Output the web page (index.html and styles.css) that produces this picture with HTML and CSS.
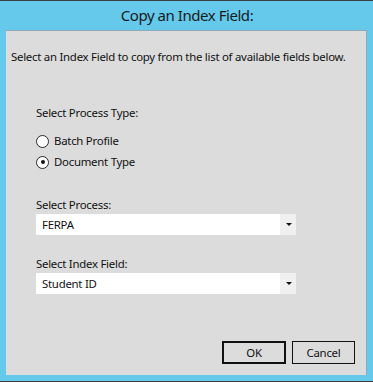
FILE: index.html
```html
<!DOCTYPE html>
<html lang="en">
<head>
    <meta charset="UTF-8">
    <title>Copy an Index Field</title>
    <link rel="stylesheet" href="styles.css">
</head>
<body>
    <div class="window">
        <div class="titlebar">Copy an Index Field:</div>
        <div class="panel">
            <div class="intro">Select an Index Field to copy from the list of available fields below.</div>
            <div class="form">
                <div class="label type-label">Select Process Type:</div>
                <div class="radio first"><span class="dot"></span>Batch Profile</div>
                <div class="radio"><span class="dot checked"></span>Document Type</div>

                <div class="label process-label">Select Process:</div>
                <div class="select">
                    <span class="select-value">FERPA</span>
                    <span class="select-arrow"></span>
                </div>

                <div class="label field-label">Select Index Field:</div>
                <div class="select">
                    <span class="select-value">Student ID</span>
                    <span class="select-arrow"></span>
                </div>
            </div>
            <div class="buttons">
                <div class="button default">OK</div>
                <div class="button">Cancel</div>
            </div>
        </div>
    </div>
</body>
</html>
```

FILE: styles.css
```css
html, body{
    margin: 0;
    padding: 0;
    font-family: "Noto Sans", "Open Sans", sans-serif;
    color: #111;
}
.window{
    background: #64c9eb;
    border-top: 1px solid #3b3f42;
    border-bottom: 1px solid #3b3f42;
    padding: 0 5px 0 6px;
    width: 362px;
    height: 380px;
}
.titlebar{
    height: 29px;
    line-height: 29px;
    text-align: center;
    font-size: 15px;
    letter-spacing: -0.45px;
    color: #1a1a1a;
}
.panel{
    height: 344px;
    width: 355px;
    background: #dcdcdc;
    border-top: 1px solid #8fa9b8;
    border-right: 1px solid #8fa9b8;
    padding-left: 5px;
    display: flex;
    flex-direction: column;
    font-size: 11.4px;
    letter-spacing: -0.25px;
}
.intro{
    margin-top: 18px;
    line-height: 16px;
    white-space: nowrap;
}
.form{
    margin-left: 25px;
    line-height: 16px;
}
.type-label{
    margin-top: 40px;
}
.radio{
    display: flex;
    align-items: center;
    height: 16px;
    margin-top: 5px;
}
.radio.first{
    margin-top: 12px;
}
.dot{
    width: 11px;
    height: 11px;
    border: 1px solid #2b2b2b;
    border-radius: 50%;
    background: #fff;
    margin-right: 5px;
    display: flex;
    align-items: center;
    justify-content: center;
}
.dot.checked::after{
    content: "";
    width: 4px;
    height: 4px;
    border-radius: 50%;
    background: #111;
}
.process-label{
    margin-top: 27px;
}
.field-label{
    margin-top: 21px;
}
.select{
    width: 260px;
    height: 21px;
    background: #fff;
    display: flex;
    align-items: center;
    margin-top: 1px;
}
.select-value{
    flex: 1;
    padding-left: 6px;
}
.select-arrow{
    width: 16px;
    height: 21px;
    background: #f0f0f0;
    position: relative;
}
.select-arrow::after{
    content: "";
    position: absolute;
    left: 6px;
    top: 9px;
    border-left: 3px solid transparent;
    border-right: 3px solid transparent;
    border-top: 3px solid #111;
}
.buttons{
    margin-top: auto;
    margin-bottom: 11px;
    margin-right: 11px;
    display: flex;
    justify-content: flex-end;
    gap: 6px;
}
.button{
    width: 63px;
    height: 23px;
    box-sizing: border-box;
    border: 1px solid #111;
    display: flex;
    align-items: center;
    justify-content: center;
}
.button.default{
    border-width: 2px;
    width: 64px;
}
```
